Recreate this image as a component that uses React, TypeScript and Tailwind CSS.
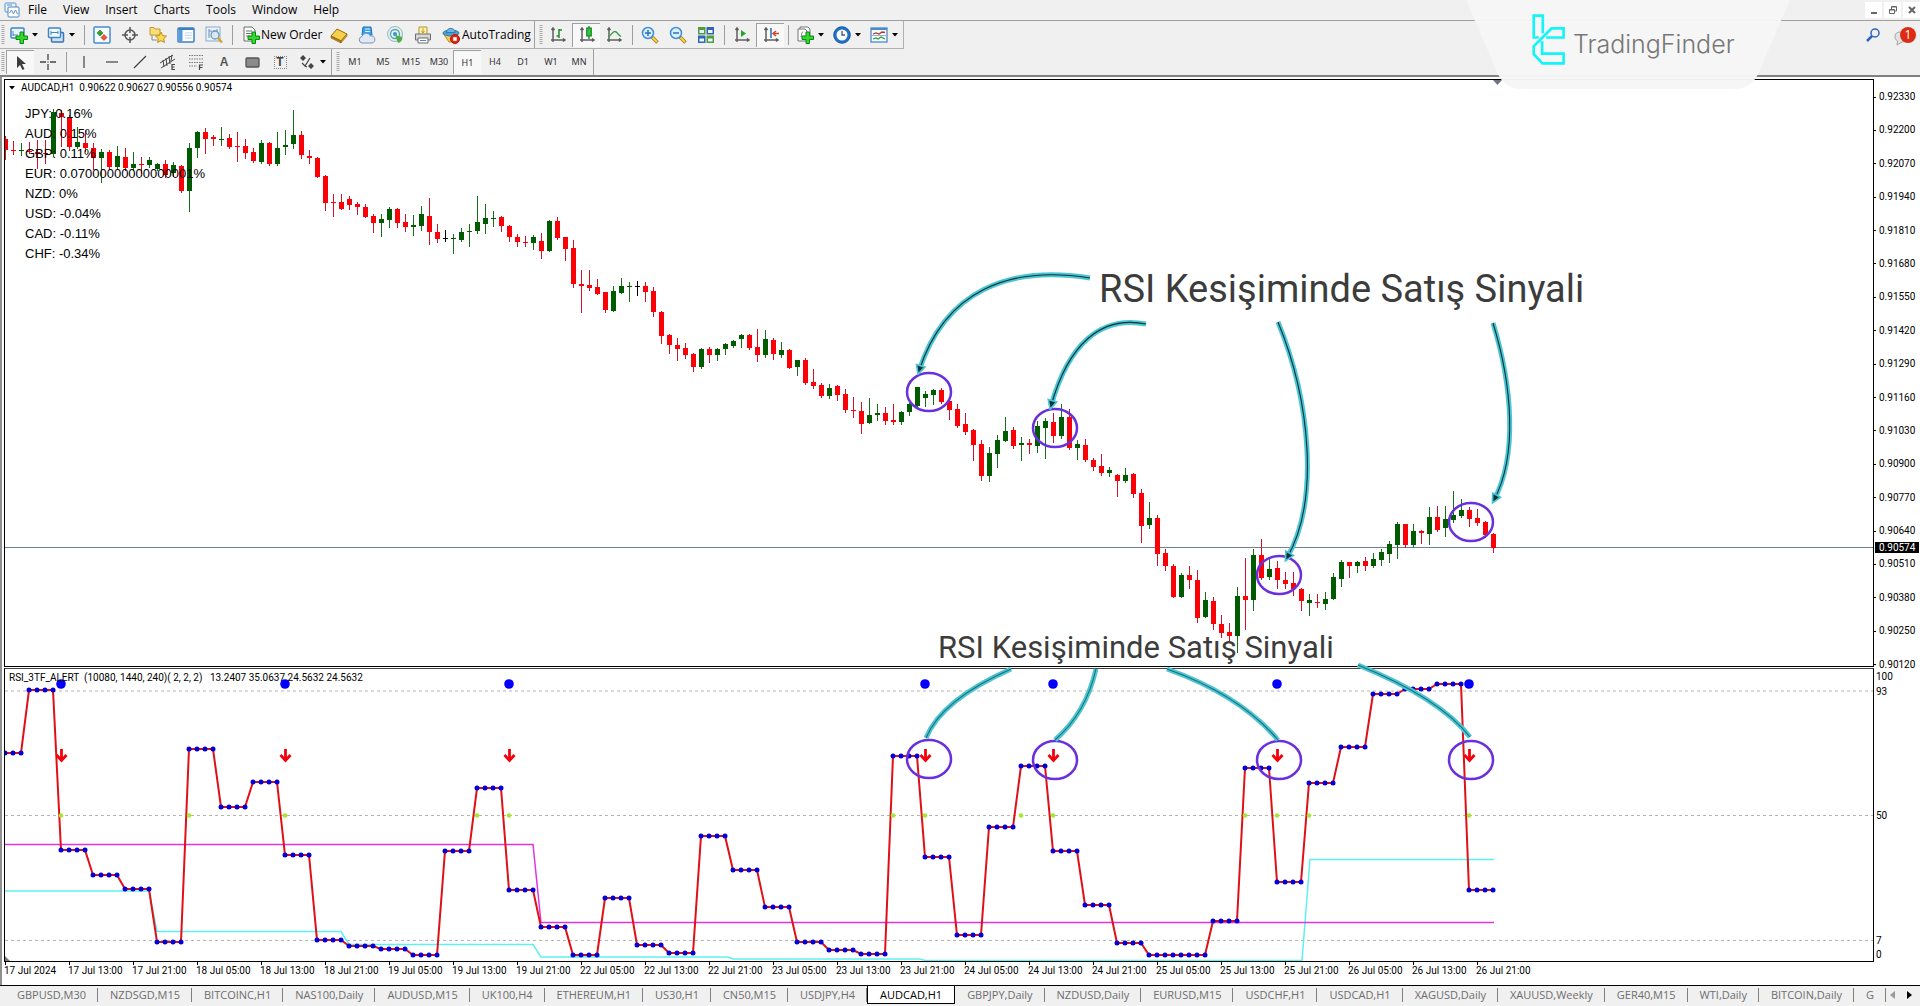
import type { ReactNode } from 'react';

const STEP = 8;
const barX = (index: number) => 5 + index * STEP;

type Candle = [number, number, number, number, 'r' | 'g' | 'k'];

// high, body top, body bottom, low, colour
const CANDLES: Candle[] = [
    [136, 139, 150, 159, 'r'], [141, 150, 151, 154, 'r'], [143, 150, 151, 155, 'g'], [142, 151, 152, 153, 'r'],
    [140, 152, 154, 168, 'r'], [140, 153, 154, 163, 'r'], [109, 112, 154, 156, 'g'], [110, 113, 117, 146, 'r'],
    [115, 117, 147, 150, 'r'], [127, 142, 147, 148, 'g'], [130, 143, 148, 151, 'r'], [143, 148, 158, 169, 'r'],
    [149, 152, 158, 182, 'g'], [150, 152, 167, 169, 'r'], [146, 156, 167, 168, 'g'], [148, 157, 168, 170, 'r'],
    [152, 164, 168, 170, 'g'], [157, 164, 165, 172, 'r'], [157, 160, 165, 167, 'g'], [163, 164, 169, 170, 'g'],
    [160, 164, 175, 177, 'r'], [162, 165, 173, 176, 'g'], [165, 166, 191, 192, 'r'], [143, 148, 191, 211, 'g'],
    [131, 132, 148, 157, 'g'], [128, 132, 139, 153, 'r'], [135, 137, 139, 145, 'r'], [127, 139, 140, 145, 'g'],
    [134, 138, 147, 148, 'r'], [132, 146, 147, 161, 'r'], [139, 146, 153, 158, 'r'], [148, 152, 161, 162, 'r'],
    [140, 143, 162, 163, 'g'], [142, 143, 164, 165, 'r'], [132, 148, 164, 165, 'g'], [130, 145, 147, 154, 'g'],
    [110, 135, 144, 148, 'g'], [131, 135, 155, 158, 'r'], [150, 156, 158, 163, 'r'], [157, 158, 177, 177, 'r'],
    [175, 176, 203, 210, 'r'], [194, 202, 203, 216, 'r'], [194, 202, 209, 209, 'r'], [196, 199, 205, 209, 'r'],
    [202, 204, 207, 214, 'r'], [204, 207, 217, 217, 'r'], [214, 216, 223, 232, 'r'], [214, 219, 223, 236, 'g'],
    [207, 209, 220, 227, 'g'], [208, 209, 223, 227, 'r'], [214, 222, 227, 231, 'r'], [215, 225, 227, 235, 'g'],
    [206, 214, 226, 230, 'g'], [198, 216, 232, 244, 'r'], [224, 232, 239, 242, 'r'], [230, 238, 239, 241, 'k'],
    [234, 238, 239, 253, 'g'], [228, 232, 240, 241, 'g'], [224, 231, 232, 246, 'g'], [196, 222, 231, 233, 'g'],
    [204, 218, 224, 233, 'g'], [211, 218, 219, 226, 'g'], [216, 217, 226, 231, 'r'], [225, 226, 237, 241, 'r'],
    [234, 237, 242, 246, 'r'], [236, 242, 243, 246, 'r'], [235, 237, 243, 249, 'g'], [233, 241, 251, 258, 'r'],
    [220, 221, 251, 251, 'g'], [217, 221, 238, 239, 'r'], [237, 237, 249, 260, 'r'], [240, 248, 284, 287, 'r'],
    [270, 284, 286, 312, 'r'], [270, 285, 288, 290, 'r'], [279, 287, 294, 294, 'r'], [292, 292, 310, 312, 'r'],
    [286, 291, 311, 311, 'g'], [278, 286, 293, 293, 'g'], [282, 286, 287, 301, 'g'], [281, 286, 287, 295, 'k'],
    [282, 286, 292, 301, 'r'], [287, 291, 312, 316, 'r'], [311, 312, 336, 343, 'r'], [334, 335, 345, 353, 'r'],
    [338, 345, 349, 360, 'r'], [343, 348, 355, 358, 'r'], [353, 354, 367, 371, 'r'], [348, 349, 367, 368, 'g'],
    [347, 349, 355, 362, 'r'], [348, 349, 355, 360, 'g'], [343, 344, 349, 354, 'g'], [340, 341, 346, 347, 'g'],
    [334, 335, 339, 347, 'g'], [334, 335, 348, 349, 'r'], [329, 347, 355, 361, 'r'], [330, 339, 355, 357, 'g'],
    [338, 340, 354, 359, 'r'], [342, 350, 355, 357, 'g'], [349, 350, 368, 368, 'r'], [360, 360, 367, 375, 'g'],
    [358, 360, 383, 384, 'r'], [369, 382, 386, 388, 'r'], [383, 385, 396, 397, 'r'], [384, 388, 396, 398, 'g'],
    [385, 386, 395, 400, 'r'], [389, 394, 410, 412, 'r'], [397, 410, 411, 417, 'r'], [402, 411, 424, 433, 'r'],
    [398, 415, 423, 423, 'g'], [404, 413, 415, 420, 'g'], [407, 413, 421, 424, 'r'], [404, 420, 422, 424, 'r'],
    [411, 412, 422, 424, 'g'], [403, 404, 412, 415, 'g'], [387, 387, 406, 407, 'g'], [391, 394, 398, 406, 'g'],
    [389, 390, 395, 404, 'g'], [388, 390, 402, 403, 'r'], [400, 401, 410, 419, 'r'], [404, 409, 426, 427, 'r'],
    [413, 424, 432, 434, 'r'], [429, 430, 445, 460, 'r'], [440, 444, 476, 480, 'r'], [447, 453, 476, 481, 'g'],
    [435, 440, 454, 467, 'g'], [417, 431, 441, 441, 'g'], [427, 430, 446, 448, 'r'], [437, 443, 445, 460, 'g'],
    [439, 443, 445, 453, 'r'], [421, 426, 446, 452, 'g'], [418, 421, 428, 458, 'g'], [413, 422, 436, 442, 'r'],
    [404, 417, 436, 438, 'g'], [409, 417, 448, 449, 'r'], [440, 444, 448, 459, 'g'], [439, 445, 460, 461, 'r'],
    [458, 460, 467, 470, 'r'], [454, 466, 473, 475, 'r'], [467, 470, 473, 476, 'g'], [474, 475, 481, 496, 'r'],
    [468, 475, 481, 482, 'g'], [473, 474, 494, 497, 'r'], [489, 493, 526, 542, 'r'], [502, 518, 525, 528, 'g'],
    [515, 518, 554, 565, 'r'], [549, 553, 566, 570, 'r'], [564, 566, 597, 597, 'r'], [573, 575, 597, 597, 'g'],
    [566, 575, 580, 588, 'r'], [570, 580, 618, 622, 'r'], [592, 600, 617, 617, 'g'], [597, 601, 624, 629, 'r'],
    [615, 624, 633, 637, 'r'], [623, 632, 636, 641, 'r'], [587, 596, 636, 652, 'g'], [558, 596, 600, 629, 'r'],
    [549, 555, 600, 610, 'g'], [539, 555, 578, 579, 'r'], [558, 569, 577, 579, 'g'], [561, 568, 580, 588, 'r'],
    [572, 580, 584, 588, 'r'], [572, 583, 589, 595, 'r'], [588, 589, 601, 610, 'r'], [594, 600, 603, 615, 'g'],
    [594, 602, 603, 607, 'r'], [592, 599, 604, 609, 'g'], [573, 577, 599, 599, 'g'], [560, 562, 579, 586, 'g'],
    [562, 562, 566, 577, 'r'], [561, 562, 566, 572, 'g'], [557, 561, 566, 570, 'r'], [553, 559, 566, 567, 'g'],
    [549, 552, 560, 565, 'g'], [541, 544, 554, 562, 'g'], [522, 524, 545, 558, 'g'], [524, 524, 545, 547, 'r'],
    [524, 531, 545, 546, 'g'], [530, 531, 533, 543, 'r'], [507, 517, 534, 544, 'g'], [506, 517, 530, 531, 'r'],
    [506, 519, 528, 536, 'g'], [491, 515, 520, 522, 'g'], [499, 510, 516, 517, 'g'], [507, 510, 519, 526, 'r'],
    [509, 518, 523, 525, 'r'], [521, 522, 535, 537, 'r'], [533, 534, 548, 552, 'r'],
];

const CANDLE_FILL = { r: '#fb0007', g: '#005a00', k: '#000000' };
const WICK_FILL = { r: '#d1122b', g: '#1a6e1a', k: '#000000' };

// first bar, level of every four hour step
const RSI_STEPS: [number, number][] = [
    [0, 753], [3, 690], [7, 850], [11, 875], [15, 889], [19, 942], [23, 749], [27, 807], [31, 782], [35, 855],
    [39, 940], [43, 946], [47, 949], [51, 955], [55, 851], [59, 788], [63, 890], [67, 927], [71, 955], [75, 898],
    [79, 945], [83, 953], [87, 836], [91, 870], [95, 907], [99, 942], [103, 950], [107, 954], [111, 756], [115, 857],
    [119, 935], [123, 827], [127, 766], [131, 851], [135, 905], [139, 943], [143, 955], [147, 955], [151, 921],
    [155, 768], [159, 882], [163, 783], [167, 747], [171, 694], [175, 689], [179, 684], [183, 890],
];

const RSI_POINTS = RSI_STEPS.flatMap(([start, y], i) => {
    const end = i + 1 < RSI_STEPS.length ? RSI_STEPS[i + 1][0] : 187;
    return Array.from({ length: end - start }, (_, n) => ({ x: barX(start + n), y }));
});

const SIGNALS = [7, 35, 63, 115, 131, 159, 183];
const CROSSES = [7, 23, 35, 59, 63, 111, 115, 127, 131, 155, 159, 163, 183];

const PRICES = [
    '0.92330', '0.92200', '0.92070', '0.91940', '0.91810', '0.91680', '0.91550', '0.91420', '0.91290',
    '0.91160', '0.91030', '0.90900', '0.90770', '0.90640', '0.90510', '0.90380', '0.90250', '0.90120',
];

const TIMES = [
    '17 Jul 2024', '17 Jul 13:00', '17 Jul 21:00', '18 Jul 05:00', '18 Jul 13:00', '18 Jul 21:00',
    '19 Jul 05:00', '19 Jul 13:00', '19 Jul 21:00', '22 Jul 05:00', '22 Jul 13:00', '22 Jul 21:00',
    '23 Jul 05:00', '23 Jul 13:00', '23 Jul 21:00', '24 Jul 05:00', '24 Jul 13:00', '24 Jul 21:00',
    '25 Jul 05:00', '25 Jul 13:00', '25 Jul 21:00', '26 Jul 05:00', '26 Jul 13:00', '26 Jul 21:00',
];

const STRENGTH = [
    ['JPY', '0.16%'], ['AUD', '0.15%'], ['GBP', '0.11%'], ['EUR', '0.07000000000000001%'],
    ['NZD', '0%'], ['USD', '-0.04%'], ['CAD', '-0.11%'], ['CHF', '-0.34%'],
];

const TABS = [
    'GBPUSD,M30', 'NZDSGD,M15', 'BITCOINC,H1', 'NAS100,Daily', 'AUDUSD,M15', 'UK100,H4', 'ETHEREUM,H1',
    'US30,H1', 'CN50,M15', 'USDJPY,H4', 'AUDCAD,H1', 'GBPJPY,Daily', 'NZDUSD,Daily', 'EURUSD,M15',
    'USDCHF,H1', 'USDCAD,H1', 'XAGUSD,Daily', 'XAUUSD,Weekly', 'GER40,M15', 'WTI,Daily', 'BITCOIN,Daily', 'G',
];

const Svg = ({ children }: { children: ReactNode }) => (
    <svg viewBox="0 0 18 18" className="h-[18px] w-[18px] shrink-0" fill="none" aria-hidden="true">
        {children}
    </svg>
);

const Plus = () => (
    <path d="M10 6h3.500v4h4v3.500h-4v4H10v-4H6V10h4z" fill="#35d62f" stroke="#0b8a12" strokeWidth="1" />
);

const Axes = () => (
    <path d="M4 2v14M2 14h14M2.500 4L4 2l1.500 2M14 12.500L16 14l-2 1.500" stroke="#5f5f5f" strokeWidth="1.500" />
);

const Lens = ({ minus }: { minus?: boolean }) => (
    <Svg>
        <path d="M11 11l5.500 5.500" stroke="#a87d10" strokeWidth="3.500" />
        <path d="M11.500 11.500l4.500 4.500" stroke="#f4d24c" strokeWidth="2" />
        <circle cx="7" cy="7" r="5.500" fill="#d9efff" stroke="#3f8fd6" strokeWidth="1.500" />
        <path d={minus ? 'M4 7h6' : 'M4 7h6M7 4v6'} stroke="#2f6fb5" strokeWidth="1.500" />
    </Svg>
);

const NewChartIcon = () => (
    <Svg>
        <rect x="1" y="2" width="13" height="10" rx="1" fill="#eaf4fd" stroke="#3f86c4" strokeWidth="1.500" />
        <path d="M3 5v5M3 9h5" stroke="#4a83b5" />
        <Plus />
    </Svg>
);

const ProfilesIcon = () => (
    <Svg>
        <rect x="4.500" y="6.500" width="12" height="9.500" rx="1" fill="#cfe2f5" stroke="#3a74b4" strokeWidth="1.500" />
        <rect x="1.500" y="2" width="12" height="9.500" rx="1" fill="#f2f8ff" stroke="#3a86cc" strokeWidth="1.500" />
        <path d="M4 5v4M4 6.500h7M11 5v3" stroke="#4a83b5" />
    </Svg>
);

const MarketWatchIcon = () => (
    <Svg>
        <rect x="1" y="1" width="16" height="16" rx="1" fill="#f8fcff" stroke="#3f8fd0" strokeWidth="1.500" />
        <path d="M7 4l3 3-3 3-3-3z" fill="#27a82b" stroke="#0e7a18" strokeWidth=".6" />
        <path d="M11 8.500l3 3-3 3-3-3z" fill="#f0523a" stroke="#b3261a" strokeWidth=".6" />
    </Svg>
);

const CrosshairIcon = () => (
    <Svg>
        <circle cx="9" cy="9" r="5" stroke="#555" strokeWidth="1.500" />
        <path d="M9 1v6M9 11v6M1 9h6M11 9h6" stroke="#555" strokeWidth="1.500" />
    </Svg>
);

const FolderStarIcon = () => (
    <Svg>
        <path d="M1 3V1.500h4L6 3h5v6H1z" fill="#f9dd7c" stroke="#c79a25" />
        <path d="M3 9v5h5" stroke="#8a8a8a" />
        <path d="M12 6l1.700 3.600 3.800.5-2.800 2.600.7 3.800-3.400-1.900-3.400 1.900.7-3.800-2.800-2.600 3.800-.5z" fill="#fbdb4f" stroke="#c08c1c" />
    </Svg>
);

const NavigatorIcon = () => (
    <Svg>
        <rect x="1" y="2" width="16" height="14" rx="1" fill="#fff" stroke="#3b7fc4" strokeWidth="1.500" />
        <path d="M1.700 3h15" stroke="#3b7fc4" strokeWidth="2" />
        <rect x="2" y="4" width="3.500" height="11.500" fill="#5a9ad8" />
        <path d="M8 7h7M8 9.500h7M8 12h7" stroke="#bcd3e8" />
    </Svg>
);

const TesterIcon = () => (
    <Svg>
        <rect x="1" y="1" width="14" height="14" fill="#eaf3fb" stroke="#86acd0" />
        <path d="M4 3v9M4 5h3M9 4v7M12 3v6" stroke="#6a8eb0" />
        <circle cx="10" cy="9" r="4" fill="#d9ecfb" fillOpacity=".8" stroke="#7292b4" strokeWidth="1.300" />
        <path d="M13 12l4 4.500" stroke="#d9a425" strokeWidth="2.500" />
    </Svg>
);

const OrderIcon = () => (
    <Svg>
        <path d="M2 1h8l3 3v11H2z" fill="#fafafa" stroke="#6e6e6e" />
        <path d="M4 5h6M4 7.500h6M4 10h4" stroke="#777" />
        <Plus />
    </Svg>
);

const GoldIcon = () => (
    <Svg>
        <path d="M1 10l6-7 10 5-6 7z" fill="#f6cf4b" stroke="#9a6a12" />
        <path d="M1 10v2l10 5v-2z" fill="#b9801b" stroke="#8a5c10" strokeWidth=".6" />
        <path d="M17 8v2l-6 7v-2z" fill="#dca62e" stroke="#8a5c10" strokeWidth=".6" />
    </Svg>
);

const CloudIcon = () => (
    <Svg>
        <path d="M5 1h8l1 8H4z" fill="#35a0ee" stroke="#1c72bd" />
        <path d="M7 3h5M7 5.500h5" stroke="#dff1ff" />
        <path d="M4 17a3.300 3.300 0 010-6.500A4.500 4.500 0 0112.500 10a3.500 3.500 0 011.500 7z" fill="#dfe8f4" stroke="#7b93b6" />
    </Svg>
);

const SignalIcon = () => (
    <Svg>
        <circle cx="9" cy="8" r="7.500" fill="#e2f0ee" stroke="#96b8c6" />
        <circle cx="9" cy="8" r="4.500" stroke="#5e9fb0" strokeWidth="1.300" />
        <circle cx="9" cy="8" r="2" fill="#2f9ad0" />
        <path d="M9 9l3 8c3-.500 4.500-3 4.500-6z" fill="#4fae4a" />
    </Svg>
);

const PrinterIcon = () => (
    <Svg>
        <path d="M5 8V1h8v7" fill="#fdf2b0" stroke="#b79528" />
        <path d="M9 2v5M7.500 5L9 7l1.500-2" stroke="#c99a1c" />
        <path d="M1.500 8h15v6h-15z" fill="#d8d8d8" stroke="#6d6d6d" />
        <path d="M4 12h10v5H4z" fill="#fff" stroke="#6d6d6d" />
        <path d="M6 14.500h6" stroke="#5b88c4" />
    </Svg>
);

const AutoTradingIcon = () => (
    <Svg>
        <path d="M1 7l6 9h7l2-9z" fill="#f7cf58" stroke="#b98a1e" />
        <ellipse cx="9" cy="7" rx="8" ry="3" fill="#4f9fd0" stroke="#2f7aac" />
        <path d="M4.500 6.500C4.500 1 13 1 13 6.500z" fill="#6bb8e2" stroke="#2f7aac" />
        <circle cx="13" cy="13" r="4.500" fill="#e3250f" stroke="#b41507" />
        <rect x="11.200" y="11.200" width="3.600" height="3.600" fill="#fff" />
    </Svg>
);

const BarsIcon = () => (
    <Svg>
        <Axes />
        <path d="M10 3v9M10 4h3M7.500 10H10" stroke="#1e8a2c" strokeWidth="1.500" />
    </Svg>
);

const CandlesIcon = () => (
    <Svg>
        <Axes />
        <path d="M11 0v13" stroke="#0f7d1c" strokeWidth="1.300" />
        <rect x="8.700" y="2" width="4.600" height="8" fill="#33c03c" stroke="#0f7d1c" />
    </Svg>
);

const LineIcon = () => (
    <Svg>
        <Axes />
        <path d="M3 11c3-1 4-5.500 7-5.500 2 0 3 3.500 6 5" stroke="#36a043" strokeWidth="1.300" />
    </Svg>
);

const TileIcon = () => (
    <Svg>
        <rect x="1" y="1" width="7.500" height="7.500" fill="#4f9e3c" />
        <rect x="9.500" y="1" width="7.500" height="7.500" fill="#2e65b4" />
        <rect x="1" y="9.500" width="7.500" height="7.500" fill="#2e65b4" />
        <rect x="9.500" y="9.500" width="7.500" height="7.500" fill="#4f9e3c" />
        <path d="M2.500 4h4.500v3H2.500zM11 4h4.500v3H11zM2.500 12.500h4.500v3H2.500zM11 12.500h4.500v3H11z" fill="#f0f6ff" />
    </Svg>
);

const AutoScrollIcon = () => (
    <Svg>
        <Axes />
        <path d="M8 4l5 3.500L8 11z" fill="#22a82b" />
    </Svg>
);

const ShiftIcon = () => (
    <Svg>
        <Axes />
        <path d="M9 2v10" stroke="#2670b8" strokeWidth="1.500" />
        <path d="M17 7.500h-5M14 5l-3 2.500 3 2.500" stroke="#cf4a26" strokeWidth="1.500" />
    </Svg>
);

const IndicatorsIcon = () => (
    <Svg>
        <path d="M4 3V1h8l2 2v9H6" fill="#fff" stroke="#777" />
        <path d="M2 3h7l2 2v10H2z" fill="#fafafa" stroke="#777" />
        <path d="M7 6c-2 0-1 3-2 5" stroke="#888" />
        <Plus />
    </Svg>
);

const ClockIcon = () => (
    <Svg>
        <circle cx="9" cy="9" r="7" fill="#f4faff" stroke="#2270c4" strokeWidth="3" />
        <circle cx="9" cy="9" r="8.300" stroke="#154f94" strokeWidth=".7" />
        <path d="M9 5v4h3" stroke="#555" strokeWidth="1.300" />
    </Svg>
);

const TemplateIcon = () => (
    <Svg>
        <rect x="1" y="2" width="16" height="14" fill="#f6fbff" stroke="#4d8bc4" strokeWidth="1.300" />
        <path d="M1 3h16" stroke="#4d8bc4" strokeWidth="2" />
        <path d="M3 8l3-1 3 1 3-2 3 .500" stroke="#b3342a" strokeWidth="1.300" />
        <path d="M2 9.500h14" stroke="#8fb3d3" />
        <path d="M3 13l3-1 2 1 3-2 4 2" stroke="#2f9a3e" strokeWidth="1.300" />
    </Svg>
);

const Caret = () => (
    <svg viewBox="0 0 6 4" className="h-1 w-[6px] shrink-0" aria-hidden="true">
        <path d="M0 0h6L3 3.500z" fill="#000" />
    </svg>
);

const Grip = () => (
    <svg viewBox="0 0 4 20" className="mr-px h-5 w-1 shrink-0" aria-hidden="true">
        <path d="M2 0v20" stroke="#a8a8a8" strokeWidth="3" strokeDasharray="1 1" />
    </svg>
);

const Divider = () => (
    <div className="flex h-5 w-2 shrink-0 justify-center">
        <div className="w-px bg-[#9d9d9d]" />
    </div>
);

interface ToolProps {
    label: string;
    pressed?: boolean;
    children: ReactNode;
}

const Tool = ({ label, pressed, children }: ToolProps) => (
    <button
        type="button"
        aria-label={label}
        className={`flex h-6 w-7 shrink-0 items-center justify-center ${
            pressed ? 'border-l border-t border-[#a0a0a0] bg-[#f8f8f8]' : ''
        }`}
    >
        {children}
    </button>
);

const MenuTool = ({ label, children }: ToolProps) => (
    <button type="button" aria-label={label} className="flex h-6 w-[37px] shrink-0 items-center justify-between pl-1 pr-[5px]">
        {children}
        <Caret />
    </button>
);

const Frame = ({ label }: { label: string }) => (
    <button
        type="button"
        className={`flex h-6 w-7 shrink-0 items-center justify-center font-['Noto_Sans',sans-serif] text-[9px] text-[#333] ${
            label === 'H1' ? 'border-l border-t border-[#a0a0a0] bg-[#f8f8f8]' : ''
        }`}
    >
        {label}
    </button>
);

const MenuBar = () => (
    <nav className="flex h-[21px] items-center border-b border-[#a0a0a0]">
        <svg viewBox="0 0 16 16" className="ml-1 h-4 w-4" fill="none" aria-hidden="true">
            <rect x="1" y="1" width="11" height="9" rx="1" fill="#eaf3fc" stroke="#5c93cc" />
            <rect x="4" y="5" width="11" height="10" rx="1" fill="#fff" stroke="#4a84c2" />
            <path d="M5.500 11l2-3 2 4 2-4 2 4" stroke="#6b94bd" />
            <path d="M3 3h5" stroke="#5c93cc" />
        </svg>
        <div className="flex gap-4 pl-2 text-[12px] leading-4">
            {['File', 'View', 'Insert', 'Charts', 'Tools', 'Window', 'Help'].map((item) => (
                <a key={item} href="#">
                    {item}
                </a>
            ))}
        </div>
        <div className="ml-auto flex gap-[2px] text-[#666]">
            {['Minimize', 'Restore', 'Close'].map((label) => (
                <button key={label} type="button" aria-label={label} className="flex h-4 w-[17px] items-center justify-center bg-white">
                    <svg viewBox="0 0 10 10" className="h-[10px] w-[10px]" fill="none" stroke="#666">
                        {label === 'Minimize' && <path d="M2 8h6" strokeWidth="2" />}
                        {label === 'Restore' && <path d="M1.500 4.500h5v4h-5zM1.500 5h5M3.500 4V1.500h5V6H7M3.500 2h5" />}
                        {label === 'Close' && <path d="M2 2l6 6M8 2L2 8" strokeWidth="2" />}
                    </svg>
                </button>
            ))}
        </div>
    </nav>
);

const MainToolbar = () => (
    <div className="flex h-7 items-stretch">
        <div className="flex items-center border-b border-r border-[#b0b0b0] pl-[1px]">
            <Grip />
            <MenuTool label="New chart"><NewChartIcon /></MenuTool>
            <MenuTool label="Profiles"><ProfilesIcon /></MenuTool>
            <Divider />
            <Tool label="Market watch"><MarketWatchIcon /></Tool>
            <Tool label="Data window"><CrosshairIcon /></Tool>
            <Tool label="Navigator"><FolderStarIcon /></Tool>
            <Tool label="Terminal"><NavigatorIcon /></Tool>
            <Tool label="Strategy tester"><TesterIcon /></Tool>
            <Divider />
            <button type="button" className="flex h-6 w-[89px] shrink-0 items-center gap-px pl-[6px] text-[12px]">
                <OrderIcon />
                <span className="whitespace-nowrap">New Order</span>
            </button>
            <Tool label="MetaEditor"><GoldIcon /></Tool>
            <Tool label="Hosting"><CloudIcon /></Tool>
            <Tool label="Signals"><SignalIcon /></Tool>
            <Tool label="Print"><PrinterIcon /></Tool>
            <button type="button" className="flex h-6 w-[97px] shrink-0 items-center gap-[2px] pl-[5px] text-[12px]">
                <AutoTradingIcon />
                <span className="whitespace-nowrap">AutoTrading</span>
            </button>
            <div className="mr-1 h-full w-px bg-[#a0a0a0]" />
            <Grip />
            <Tool label="Bar chart"><BarsIcon /></Tool>
            <Tool label="Candlesticks" pressed><CandlesIcon /></Tool>
            <Tool label="Line chart"><LineIcon /></Tool>
            <Divider />
            <Tool label="Zoom in"><Lens /></Tool>
            <Tool label="Zoom out"><Lens minus /></Tool>
            <Tool label="Tile windows"><TileIcon /></Tool>
            <Divider />
            <Tool label="Auto scroll"><AutoScrollIcon /></Tool>
            <Tool label="Chart shift" pressed><ShiftIcon /></Tool>
            <Divider />
            <MenuTool label="Indicators"><IndicatorsIcon /></MenuTool>
            <MenuTool label="Periods"><ClockIcon /></MenuTool>
            <MenuTool label="Templates"><TemplateIcon /></MenuTool>
        </div>
        <div className="ml-auto flex items-center gap-3 pr-1">
            <button type="button" aria-label="Search">
                <svg viewBox="0 0 14 14" className="h-[14px] w-[14px]" fill="none" stroke="#2f62c0" aria-hidden="true">
                    <circle cx="9" cy="5" r="4" strokeWidth="1.500" />
                    <path d="M6 8l-5 5" strokeWidth="2.500" />
                </svg>
            </button>
            <button type="button" aria-label="Messages" className="relative h-6 w-6">
                <svg viewBox="0 0 24 24" className="h-6 w-6" aria-hidden="true">
                    <path d="M3 13a5 5 0 015-4l6 2a5 5 0 01-4 8l-5 3 .500-4C3.500 17 3 15 3 13z" fill="#e2e2e2" stroke="#a5a5a5" />
                </svg>
                <span className="absolute right-0 top-1 flex h-4 w-4 items-center justify-center rounded-full bg-[#dd2c14] text-[12px] leading-none text-white">
                    1
                </span>
            </button>
        </div>
    </div>
);

const DrawToolbar = () => (
    <div className="flex h-[26px] items-stretch">
        <div className="flex items-center border-r border-[#a0a0a0] pl-[1px]">
            <Grip />
            <Tool label="Cursor" pressed>
                <Svg><path d="M5 2v12l3-3 2.500 5 2-1-2.500-5h4z" fill="#3d3d3d" /></Svg>
            </Tool>
            <Tool label="Crosshair">
                <Svg><path d="M9 1v6M9 11v6M1 9h6M11 9h6M8.500 9h1" stroke="#444" strokeWidth="1.300" /></Svg>
            </Tool>
            <Divider />
            <Tool label="Vertical line">
                <Svg><path d="M9 3v12" stroke="#444" strokeWidth="1.200" /></Svg>
            </Tool>
            <Tool label="Horizontal line">
                <Svg><path d="M3 9h12" stroke="#444" strokeWidth="1.200" /></Svg>
            </Tool>
            <Tool label="Trendline">
                <Svg><path d="M3 15L15 3" stroke="#444" strokeWidth="1.200" /></Svg>
            </Tool>
            <Tool label="Equidistant channel">
                <Svg>
                    <path d="M1 10L14 2M2 15L16 6M4 7l1 7M7 5l1 8M10 3l1 8M13 2l-1 6" stroke="#444" />
                    <path d="M16 11.500h-3v5h3M13 14h2.500" stroke="#444" strokeWidth="1.200" />
                </Svg>
            </Tool>
            <Tool label="Fibonacci retracement">
                <Svg>
                    <path d="M2 2.500h14M2 6h14M2 9.500h14M2 13h8" stroke="#777" strokeWidth="1.200" strokeDasharray="1.500 1" />
                    <path d="M12.500 17v-5H16M12.500 14.500h3" stroke="#444" strokeWidth="1.200" />
                </Svg>
            </Tool>
            <Tool label="Text">
                <span className="font-['Liberation_Sans',sans-serif] text-[12px] font-bold text-[#555]">A</span>
            </Tool>
            <Tool label="Rectangle">
                <Svg><rect x="3" y="5" width="13" height="9" rx="1" fill="#8a8a8a" stroke="#555" strokeWidth="1.300" /></Svg>
            </Tool>
            <Tool label="Text label">
                <span className="flex h-[13px] w-[13px] items-center justify-center border border-dotted border-[#888] font-['Liberation_Sans',sans-serif] text-[12px] font-bold leading-none text-[#444]">
                    T
                </span>
            </Tool>
            <MenuTool label="Arrows">
                <Svg>
                    <path d="M5 2l3 3-3 3-3-3zM13 10l3 3-3 3-3-3z" fill="#444" />
                    <path d="M4 10l3 3 5-8M9 14l-2-1" stroke="#444" strokeWidth="1.200" />
                </Svg>
            </MenuTool>
            <div className="mr-1 h-full w-px bg-[#a0a0a0]" />
            <Grip />
            {['M1', 'M5', 'M15', 'M30', 'H1', 'H4', 'D1', 'W1', 'MN'].map((label) => (
                <Frame key={label} label={label} />
            ))}
        </div>
    </div>
);

const Brand = () => (
    <div className="absolute right-[130px] top-0 z-10 h-[89px] w-[324px]">
        <svg viewBox="0 0 324 89" className="absolute inset-0 h-full w-full" aria-hidden="true">
            <path d="M0 0H324L293 72Q286 89 268 89H56Q38 89 31 72Z" fill="#f6f6f6" fillOpacity=".97" />
        </svg>
        <div className="relative flex items-center gap-2 pl-[66px] pt-[14px]">
            <svg viewBox="276 43 98 152" className="h-[51px] w-[33px]" fill="none" stroke="#14f4fb" strokeWidth="8" aria-hidden="true">
                <path d="M308 100V48H281V113H296" />
                <path d="M318 113H370V86H334L281 139V163L307 190H370V161H306V124" />
            </svg>
            <span className="pt-2 font-[Inter,sans-serif] text-[25px] font-light leading-8 text-[#777]">TradingFinder</span>
        </div>
    </div>
);

const PriceChart = () => (
    <div className="relative border border-black bg-white">
        <svg viewBox="5 80 1868 586" className="block h-auto w-full" role="img" aria-label="AUDCAD H1 candlesticks">
            <path d="M5 547.500H1873" stroke="#708090" />
            <path d="M1493 80h9l-4.500 5z" fill="#6f7480" />
            {CANDLES.map(([high, top, bottom, low, kind], i) => (
                <g key={i}>
                    <rect x={barX(i)} y={high} width="1" height={low - high + 1} fill={WICK_FILL[kind]} />
                    <rect x={barX(i) - 2} y={top} width="5" height={Math.max(bottom - top, 1)} fill={CANDLE_FILL[kind]} />
                </g>
            ))}
        </svg>
        <div className="absolute left-[4px] top-[2px] flex items-center gap-[6px] leading-3">
            <Caret />
            <span className="whitespace-pre">AUDCAD,H1  0.90622 0.90627 0.90556 0.90574</span>
        </div>
        <ul className="absolute left-5 top-6 font-['Liberation_Sans',sans-serif] text-[13px] leading-5">
            {STRENGTH.map(([name, value]) => (
                <li key={name}>
                    {name}: {value}
                </li>
            ))}
        </ul>
    </div>
);

const RsiChart = () => (
    <div className="relative border border-t-[#444] border-black bg-white">
        <svg viewBox="5 669 1868 292" className="block h-auto w-full" role="img" aria-label="RSI indicator">
            <path d="M5 691H1873M5 815.500H1873M5 940.500H1873" stroke="#b4b4b4" strokeDasharray="3 3" />
            <path d="M5 891H149L157 931.500H341L349 944.500H533L541 957H728L733 959H920L925 960.500H1302L1310 859.500H1494" fill="none" stroke="#5ff0f2" strokeWidth="1.500" />
            <path d="M5 844.500H533L541 922.500H1494" fill="none" stroke="#e034e0" strokeWidth="1.500" />
            <polyline points={RSI_POINTS.map(({ x, y }) => `${x},${y}`).join(' ')} fill="none" stroke="#e01116" strokeWidth="2" />
            {CROSSES.map((bar) => (
                <circle key={bar} cx={barX(bar)} cy="815.500" r="2.300" fill="#a4ea2c" />
            ))}
            {RSI_POINTS.map(({ x, y }) => (
                <circle key={x} cx={x} cy={y} r="2.500" fill="#0000d8" />
            ))}
            {SIGNALS.map((bar) => (
                <g key={bar}>
                    <circle cx={barX(bar)} cy="684" r="4.800" fill="#0000fa" />
                    <path
                        d={`M${barX(bar) + 0.5} 749v11M${barX(bar) - 4.5} 755l5 5.500 5-5.500`}
                        fill="none"
                        stroke="#f4000b"
                        strokeWidth="2.800"
                    />
                </g>
            ))}
            <path d="M5 956v5h5z" fill="#777" />
        </svg>
        <div className="absolute left-1 top-[3px] whitespace-pre leading-3">
            RSI_3TF_ALERT  (10080, 1440, 240)( 2, 2, 2)   13.2407 35.0637 24.5632 24.5632
        </div>
    </div>
);

const ARROWS = [
    'M1090 278C1010 265 945 290 919 371',
    'M1146 324C1100 315 1068 345 1051 406',
    'M1278 322C1310 400 1320 500 1287 558',
    'M1493 323C1512 385 1518 455 1494 500',
];

const LOWER_ARROWS = [
    'M1011 669C975 685 938 708 926 738',
    'M1096 669Q1086 713 1055 740',
    'M1167 669Q1240 695 1278 740',
    'M1358 665C1400 682 1445 705 1470 737',
];

const RINGS = [
    [929, 392], [1055, 428], [1279, 575], [1471, 522],
    [929, 759], [1055, 760], [1279, 760], [1471, 760],
];

const Notes = () => (
    <svg viewBox="4 79 1870 883" className="pointer-events-none absolute inset-0 h-full w-full" fill="none">
        <defs>
            <marker id="tip" viewBox="0 0 10 10" refX="6" refY="5" markerWidth="11" markerHeight="11" markerUnits="userSpaceOnUse" orient="auto">
                <path d="M1 1l8 4-8 4z" fill="#06323a" stroke="#4cc5d3" strokeWidth="1.500" />
            </marker>
        </defs>
        {RINGS.map(([x, y]) => (
            <ellipse key={`${x}-${y}`} cx={x} cy={y} rx="22" ry="19" stroke="#6a30dc" strokeWidth="2.500" />
        ))}
        {[...ARROWS, ...LOWER_ARROWS].map((d) => (
            <path key={d} d={d} stroke="#4cc5d3" strokeWidth="5" />
        ))}
        {ARROWS.map((d) => (
            <path key={d} d={d} stroke="#06323a" strokeWidth="1.100" markerEnd="url(#tip)" />
        ))}
        {LOWER_ARROWS.map((d) => (
            <path key={d} d={d} stroke="#1d6e7a" strokeWidth="1.100" />
        ))}
        <text x="1099" y="302" className="font-[Roboto,sans-serif] text-[38px]" fill="#3c3c3c">
            RSI Kesişiminde Satış Sinyali
        </text>
        <text x="938" y="658" className="font-[Roboto,sans-serif] text-[31px]" fill="#3c3c3c">
            RSI Kesişiminde Satış Sinyali
        </text>
    </svg>
);

const Tick = ({ children }: { children: ReactNode }) => (
    <span className="flex items-center gap-[3px]">
        <span className="h-px w-[2px] bg-black" />
        {children}
    </span>
);

const PriceScale = () => (
    <div className="relative -mb-[3px] flex flex-col justify-between pt-3 leading-3">
        {PRICES.map((price) => (
            <Tick key={price}>{price}</Tick>
        ))}
        <span className="absolute left-px top-[78.3%] bg-black px-1 leading-[11px] text-white">0.90574</span>
    </div>
);

const RsiScale = () => (
    <div className="flex flex-col pb-px pl-[2px] pt-[3px] leading-3">
        <span>100</span>
        <div className="mb-[2px] mt-[3px] flex flex-1 flex-col justify-between">
            <span>93</span>
            <span>50</span>
            <span>7</span>
        </div>
        <span>0</span>
    </div>
);

const ChartWindow = () => (
    <main className="border-l-2 border-[#909090] bg-white pl-[2px] pt-[2px] font-[Roboto,sans-serif] text-[10px]">
        <div className="grid grid-cols-[minmax(0,1fr)_46px]">
            <div className="relative col-start-1 row-span-2 row-start-1 flex flex-col gap-px">
                <PriceChart />
                <RsiChart />
                <Notes />
            </div>
            <div className="col-start-2 row-span-2 row-start-1 grid grid-rows-[2fr_1fr]">
                <PriceScale />
                <RsiScale />
            </div>
        </div>
        <div className="mr-[46px] h-[23px]">
            <div className="grid w-[82.14%] grid-cols-[repeat(24,minmax(0,1fr))]">
                {TIMES.map((time) => (
                    <span key={time} className="flex flex-col whitespace-nowrap leading-3">
                        <span className="ml-px h-[3px] w-px bg-black" />
                        {time}
                    </span>
                ))}
            </div>
        </div>
    </main>
);

const ChartTabs = () => (
    <footer className="flex h-[21px] items-start border-t border-black bg-[#f0f0f0]">
        <div role="tablist" className="flex min-w-0 flex-1 overflow-hidden pl-[5px] text-[11px] leading-[17px] text-[#6d6d6d]">
            {TABS.map((tab) => (
                <button
                    key={tab}
                    type="button"
                    role="tab"
                    aria-selected={tab === 'AUDCAD,H1'}
                    className={
                        tab === 'AUDCAD,H1'
                            ? 'h-[18px] shrink-0 border-x border-b border-black bg-white px-3 text-black'
                            : 'shrink-0'
                    }
                >
                    {tab === 'AUDCAD,H1' ? (
                        tab
                    ) : (
                        <span className="block border-r border-[#808080] pl-3 pr-[11px] leading-[14px]">{tab}</span>
                    )}
                </button>
            ))}
        </div>
        <div className="flex h-[17px] items-center gap-3 pr-2">
            <button type="button" aria-label="Scroll tabs left">
                <svg viewBox="0 0 5 8" className="h-2 w-[5px]"><path d="M5 0v8L0 4z" fill="#9a9a9a" /></svg>
            </button>
            <button type="button" aria-label="Scroll tabs right">
                <svg viewBox="0 0 5 8" className="h-2 w-[5px]"><path d="M0 0v8l5-4z" fill="#000" /></svg>
            </button>
        </div>
    </footer>
);

const App = () => {
    return (
        <div className="relative overflow-hidden bg-[#f0f0f0] font-['Open_Sans',sans-serif] text-black">
            <header className="border-b-2 border-[#808080]">
                <MenuBar />
                <MainToolbar />
                <DrawToolbar />
            </header>
            <Brand />
            <ChartWindow />
            <ChartTabs />
        </div>
    );
};

export default App;
